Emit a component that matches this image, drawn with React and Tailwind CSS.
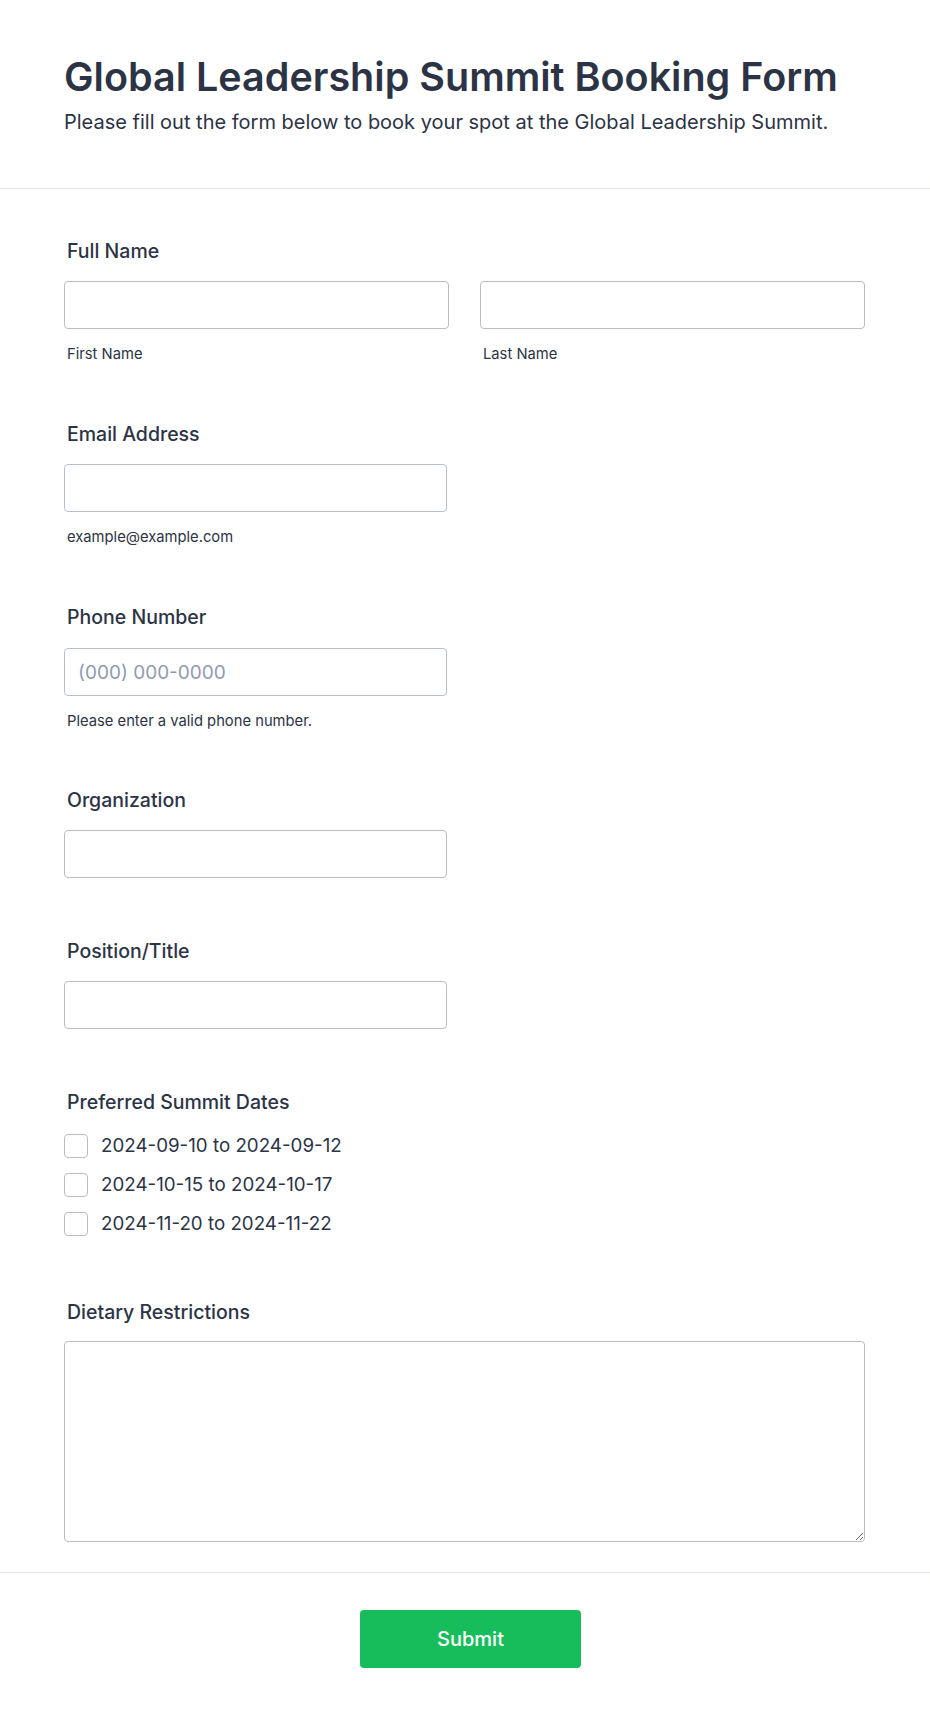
import React from "react";

const font = { fontFamily: "Inter, 'Noto Sans', sans-serif" };

function Label({ children }) {
  return (
    <div className="text-[19.5px] leading-[28px] font-medium text-[#2c3345] pl-[3px]">
      {children}
    </div>
  );
}

function Input({ placeholder, className = "" }) {
  return (
    <input
      placeholder={placeholder}
      className={
        "block h-[48px] w-[383px] rounded-[4px] border border-[#b8bdc9] bg-white px-[13px] text-[19px] text-[#2c3345] placeholder:text-[#8f9bb0] outline-none " +
        className
      }
    />
  );
}

function Sub({ children }) {
  return (
    <div className="mt-[15px] text-[14.75px] leading-[20px] text-[#2c3345] pl-[3px]">
      {children}
    </div>
  );
}

function Check({ label }) {
  return (
    <label className="flex h-[39px] items-center">
      <span className="block h-[24px] w-[24px] rounded-[4px] border border-[#b8bdc9] bg-white" />
      <span className="ml-[13px] text-[18.75px] leading-[28px] text-[#2c3345]">{label}</span>
    </label>
  );
}

export default function App() {
  return (
    <div className="min-h-[1719px] w-full bg-white" style={font}>
      <div className="border-b border-[#e3e6ec] pt-[55px] pb-[52px]">
        <div className="ml-[64px] w-[801px]">
          <h1 className="text-[39.5px] leading-[44px] font-semibold text-[#2c3345]">
            Global Leadership Summit Booking Form
          </h1>
          <p className="mt-[9px] text-[20px] leading-[28px] text-[#2c3345]">
            Please fill out the form below to book your spot at the Global Leadership Summit.
          </p>
        </div>
      </div>

      <div className="ml-[64px] w-[801px] pt-[48px]">
        <section>
          <Label>Full Name</Label>
          <div className="mt-[16px] flex gap-[31px]">
            <div>
              <Input className="w-[385px]" />
              <Sub>First Name</Sub>
            </div>
            <div>
              <Input className="w-[385px]" />
              <Sub>Last Name</Sub>
            </div>
          </div>
        </section>

        <section className="mt-[56px]">
          <Label>Email Address</Label>
          <Input className="mt-[16px]" />
          <Sub>example@example.com</Sub>
        </section>

        <section className="mt-[56px]">
          <Label>Phone Number</Label>
          <Input className="mt-[17px]" placeholder="(000) 000-0000" />
          <Sub>Please enter a valid phone number.</Sub>
        </section>

        <section className="mt-[55px]">
          <Label>Organization</Label>
          <Input className="mt-[16px]" />
        </section>

        <section className="mt-[59px]">
          <Label>Position/Title</Label>
          <Input className="mt-[16px]" />
        </section>

        <section className="mt-[59px]">
          <Label>Preferred Summit Dates</Label>
          <div className="mt-[10px] flex flex-col">
            <Check label="2024-09-10 to 2024-09-12" />
            <Check label="2024-10-15 to 2024-10-17" />
            <Check label="2024-11-20 to 2024-11-22" />
          </div>
        </section>

        <section className="mt-[55px] pb-[30px]">
          <Label>Dietary Restrictions</Label>
          <textarea className="mt-[15px] block h-[201px] w-[801px] rounded-[4px] border border-[#b8bdc9] bg-white px-[12px] py-[10px] text-[19px] text-[#2c3345] outline-none" />
        </section>
      </div>

      <div className="border-t border-[#e3e6ec] pt-[37px] pb-[50px] flex justify-center">
        <button className="ml-[11px] h-[58px] w-[221px] rounded-[4px] bg-[#18bd5b] text-[20px] font-medium text-white">
          Submit
        </button>
      </div>
    </div>
  );
}
